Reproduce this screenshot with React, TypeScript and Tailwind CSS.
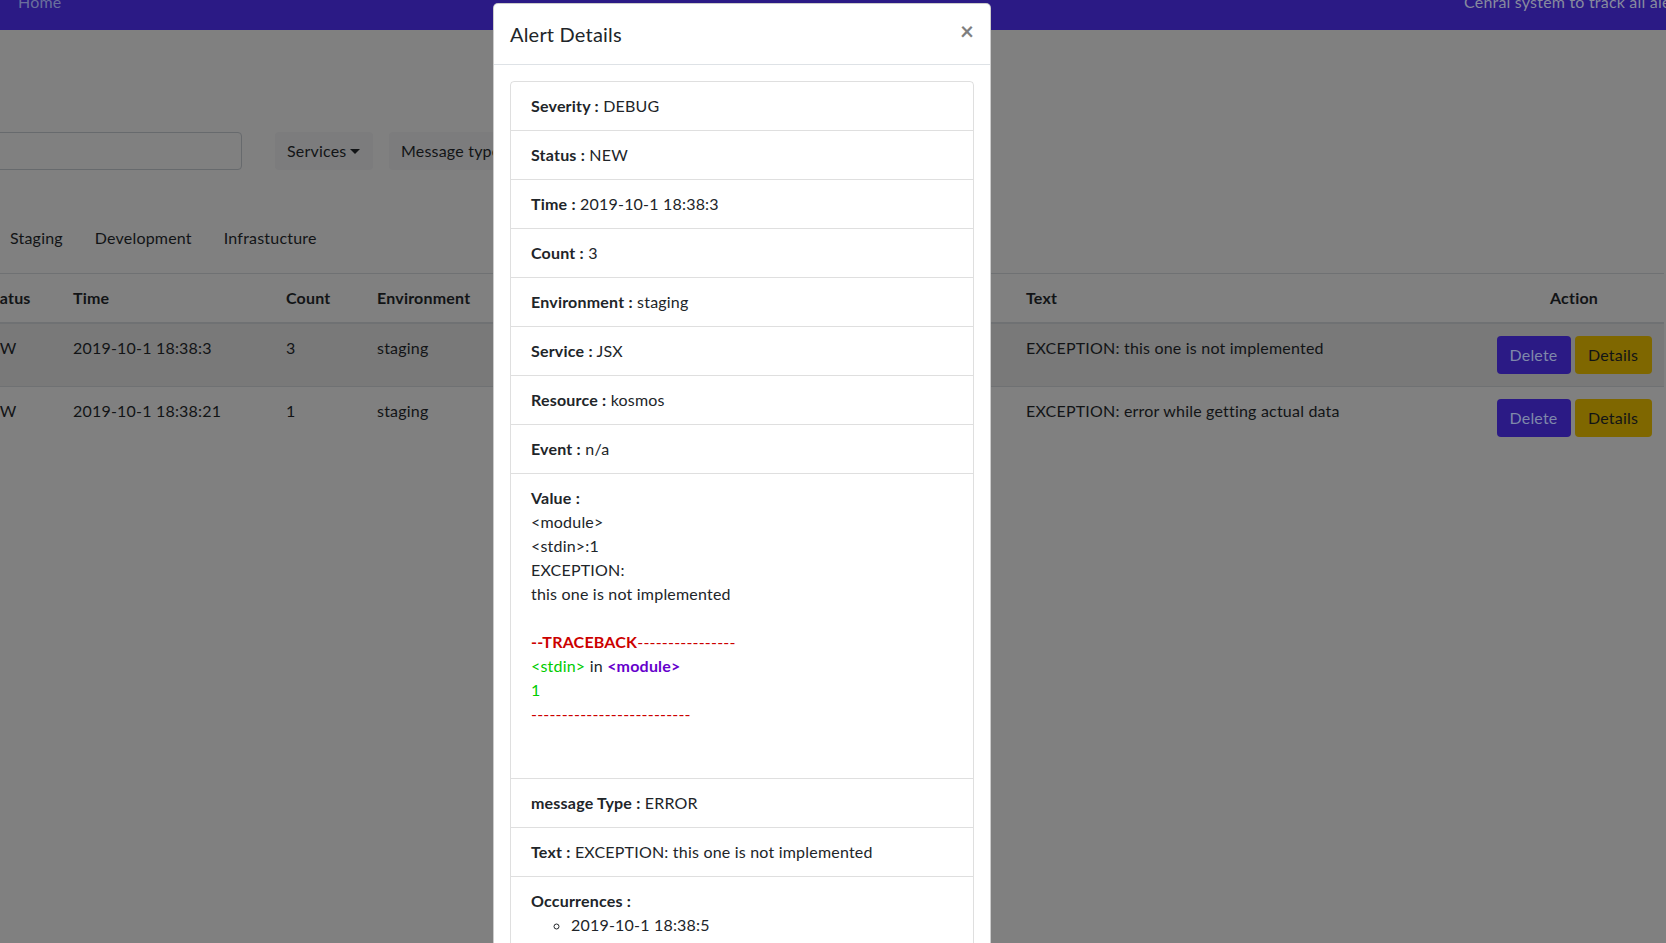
import React from "react";

const rows = [
    {
        severity: "DEBUG",
        status: "NEW",
        time: "2019-10-1 18:38:3",
        count: "3",
        env: "staging",
        service: "JSX",
        resource: "kosmos",
        event: "n/a",
        type: "ERROR",
        text: "EXCEPTION: this one is not implemented",
    },
    {
        severity: "DEBUG",
        status: "NEW",
        time: "2019-10-1 18:38:21",
        count: "1",
        env: "staging",
        service: "JSX",
        resource: "kosmos",
        event: "n/a",
        type: "ERROR",
        text: "EXCEPTION: error while getting actual data",
    },
];

const cols =
    "grid grid-cols-[88px_213px_91px_135px_120px_140px_110px_144px_470px_180px]";

const Caret = () => (
    <span className="ml-1 inline-block h-0 w-0 border-x-[5px] border-t-[5px] border-x-transparent border-t-[#121416] align-middle"></span>
);

const Item = ({ label, value }: { label: string; value: string }) => (
    <div className="border-t border-black/[.125] px-5 py-3 first:border-t-0">
        <span className="font-bold">{label} :</span> {value}
    </div>
);

const AlertModal = () => (
    <div className="absolute left-[493px] top-[3px] w-[498px] rounded-[5px] border border-black/20 bg-white text-[#212529]">
        <div className="flex items-start justify-between border-b border-[#dee2e6] px-4 py-[15px]">
            <h5 className="text-xl leading-[30px]">Alert Details</h5>
            <button className="text-2xl font-bold leading-6 text-black opacity-50">
                ×
            </button>
        </div>
        <div className="p-4">
            <div className="rounded border border-black/[.125]">
                <Item label="Severity" value="DEBUG" />
                <Item label="Status" value="NEW" />
                <Item label="Time" value="2019-10-1 18:38:3" />
                <Item label="Count" value="3" />
                <Item label="Environment" value="staging" />
                <Item label="Service" value="JSX" />
                <Item label="Resource" value="kosmos" />
                <Item label="Event" value="n/a" />
                <div className="border-t border-black/[.125] px-5 py-3">
                    <div className="font-bold">Value :</div>
                    <div className="mb-4">
                        <div>&lt;module&gt;</div>
                        <div>&lt;stdin&gt;:1</div>
                        <div>EXCEPTION:</div>
                        <div>this one is not implemented</div>
                        <div className="h-6"></div>
                        <div className="text-[#cc0000]">
                            <span className="font-bold">--TRACEBACK</span>
                            ----------------
                        </div>
                        <div>
                            <span className="text-[#00cc00]">&lt;stdin&gt;</span> in{" "}
                            <span className="font-bold text-[#6600cc]">&lt;module&gt;</span>
                        </div>
                        <div className="text-[#00cc00]">1</div>
                        <div className="text-[#cc0000]">--------------------------</div>
                        <div className="h-6"></div>
                    </div>
                </div>
                <Item label="message Type" value="ERROR" />
                <Item label="Text" value="EXCEPTION: this one is not implemented" />
                <div className="border-t border-black/[.125] px-5 py-3">
                    <div className="font-bold">Occurrences :</div>
                    <ul className="list-[circle] pl-10">
                        <li>2019-10-1 18:38:5</li>
                        <li>2019-10-1 18:38:3</li>
                    </ul>
                </div>
            </div>
        </div>
    </div>
);

export default function App() {
    return (
        <div className="relative h-[943px] w-[1666px] overflow-hidden bg-[#808080] font-[Lato,'Liberation_Sans',sans-serif] text-base leading-6 tracking-[0.2px] text-[#121416]">
            <div className="-mt-[26px]">
                <nav className="flex h-[56px] items-center whitespace-nowrap bg-[#2b1a85] pl-[18px]">
                    <div className="w-[1446px] shrink-0 text-[#6a6f9c]">Home</div>
                    <div className="text-[#878a9e]">Cenral system to track all alerts</div>
                </nav>

                <div className="-ml-[27px] w-[1691px]">
                    <div className="mt-[102px] flex h-[38px] items-center">
                        <div className="h-[38px] w-[269px] rounded border border-[#676a6d]"></div>
                        <button className="ml-[33px] flex h-[38px] w-[98px] items-center rounded bg-[#7c7c7d] px-3">
                            Services
                            <Caret />
                        </button>
                        <button className="ml-4 flex h-[38px] items-center rounded bg-[#7c7c7d] px-3 whitespace-nowrap">
                            Message type
                            <Caret />
                        </button>
                    </div>

                    <ul className="-ml-[91px] mt-[48px] flex h-10 items-center">
                        <li className="w-[112px] px-4 text-right">Production</li>
                        <li className="px-4">Staging</li>
                        <li className="px-4">Development</li>
                        <li className="px-4">Infrastucture</li>
                    </ul>

                    <div className="mt-[15px] border-t border-[#6f7173]">
                        <div className={`${cols} border-b-2 border-[#6f7173] font-bold`}>
                            <div className="p-3">Status</div>
                            <div className="p-3">Time</div>
                            <div className="p-3">Count</div>
                            <div className="p-3">Environment</div>
                            <div className="p-3">Service</div>
                            <div className="p-3">Resource</div>
                            <div className="p-3">Event</div>
                            <div className="p-3">Severity</div>
                            <div className="p-3">Text</div>
                            <div className="p-3 text-center">Action</div>
                        </div>
                        {rows.map((row, i) => (
                            <div
                                key={i}
                                className={`${cols} ${i > 0 ? "border-t border-[#6f7173]" : ""} ${i % 2 === 0 ? "bg-[#797979]" : ""}`}
                            >
                                <div className="py-3 pl-[5px] pr-3">{row.status}</div>
                                <div className="p-3">{row.time}</div>
                                <div className="p-3">{row.count}</div>
                                <div className="p-3">{row.env}</div>
                                <div className="p-3">{row.service}</div>
                                <div className="p-3">{row.resource}</div>
                                <div className="p-3">{row.event}</div>
                                <div className="p-3">{row.severity}</div>
                                <div className="p-3">{row.text}</div>
                                <div className="flex justify-center gap-1 p-3">
                                    <button className="h-[38px] w-[74px] rounded bg-[#2b1a85] text-[#7f88aa]">
                                        Delete
                                    </button>
                                    <button className="h-[38px] w-[77px] rounded bg-[#7f6700]">
                                        Details
                                    </button>
                                </div>
                            </div>
                        ))}
                    </div>
                </div>
            </div>

            <AlertModal />
        </div>
    );
}
